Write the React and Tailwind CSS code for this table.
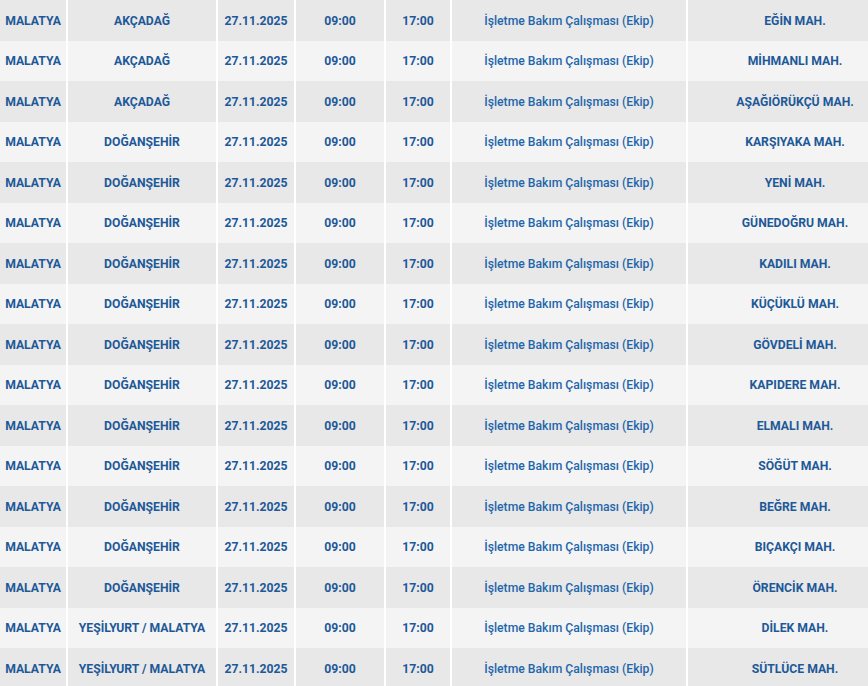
import React from "react";

const rows = [
  ["AKÇADAĞ", "EĞİN MAH."],
  ["AKÇADAĞ", "MİHMANLI MAH."],
  ["AKÇADAĞ", "AŞAĞIÖRÜKÇÜ MAH."],
  ["DOĞANŞEHİR", "KARŞIYAKA MAH."],
  ["DOĞANŞEHİR", "YENİ MAH."],
  ["DOĞANŞEHİR", "GÜNEDOĞRU MAH."],
  ["DOĞANŞEHİR", "KADILI MAH."],
  ["DOĞANŞEHİR", "KÜÇÜKLÜ MAH."],
  ["DOĞANŞEHİR", "GÖVDELİ MAH."],
  ["DOĞANŞEHİR", "KAPIDERE MAH."],
  ["DOĞANŞEHİR", "ELMALI MAH."],
  ["DOĞANŞEHİR", "SÖĞÜT MAH."],
  ["DOĞANŞEHİR", "BEĞRE MAH."],
  ["DOĞANŞEHİR", "BIÇAKÇI MAH."],
  ["DOĞANŞEHİR", "ÖRENCİK MAH."],
  ["YEŞİLYURT / MALATYA", "DİLEK MAH."],
  ["YEŞİLYURT / MALATYA", "SÜTLÜCE MAH."],
];

function Cell({ w, children, last, desc }) {
  return (
    <div
      className={`${w} shrink-0 flex items-center justify-center pt-[1px] ${last ? "" : "border-r-2 border-white"} ${desc ? "font-medium text-[#1e66ab]" : "font-bold text-[#1d5998]"}`}
    >
      {children}
    </div>
  );
}

export default function App() {
  return (
    <div
      className="w-[868px] h-[686px] overflow-hidden bg-white text-[12.2px] leading-none"
      style={{ fontFamily: "Roboto, 'Noto Sans', sans-serif" }}
    >
      <div className="w-[902px] flex flex-col">
        {rows.map((r, i) => (
          <div
            key={i}
            className={`flex h-[40.5px] ${i % 2 === 0 ? "bg-[#e8e8e8]" : "bg-[#f4f4f4]"}`}
          >
            <Cell w="w-[68px]">MALATYA</Cell>
            <Cell w="w-[150px]">{r[0]}</Cell>
            <Cell w="w-[78px]">27.11.2025</Cell>
            <Cell w="w-[90px]">09:00</Cell>
            <Cell w="w-[66px]">17:00</Cell>
            <Cell w="w-[236px]" desc>İşletme Bakım Çalışması (Ekip)</Cell>
            <Cell w="w-[214px]" last>{r[1]}</Cell>
          </div>
        ))}
      </div>
    </div>
  );
}
